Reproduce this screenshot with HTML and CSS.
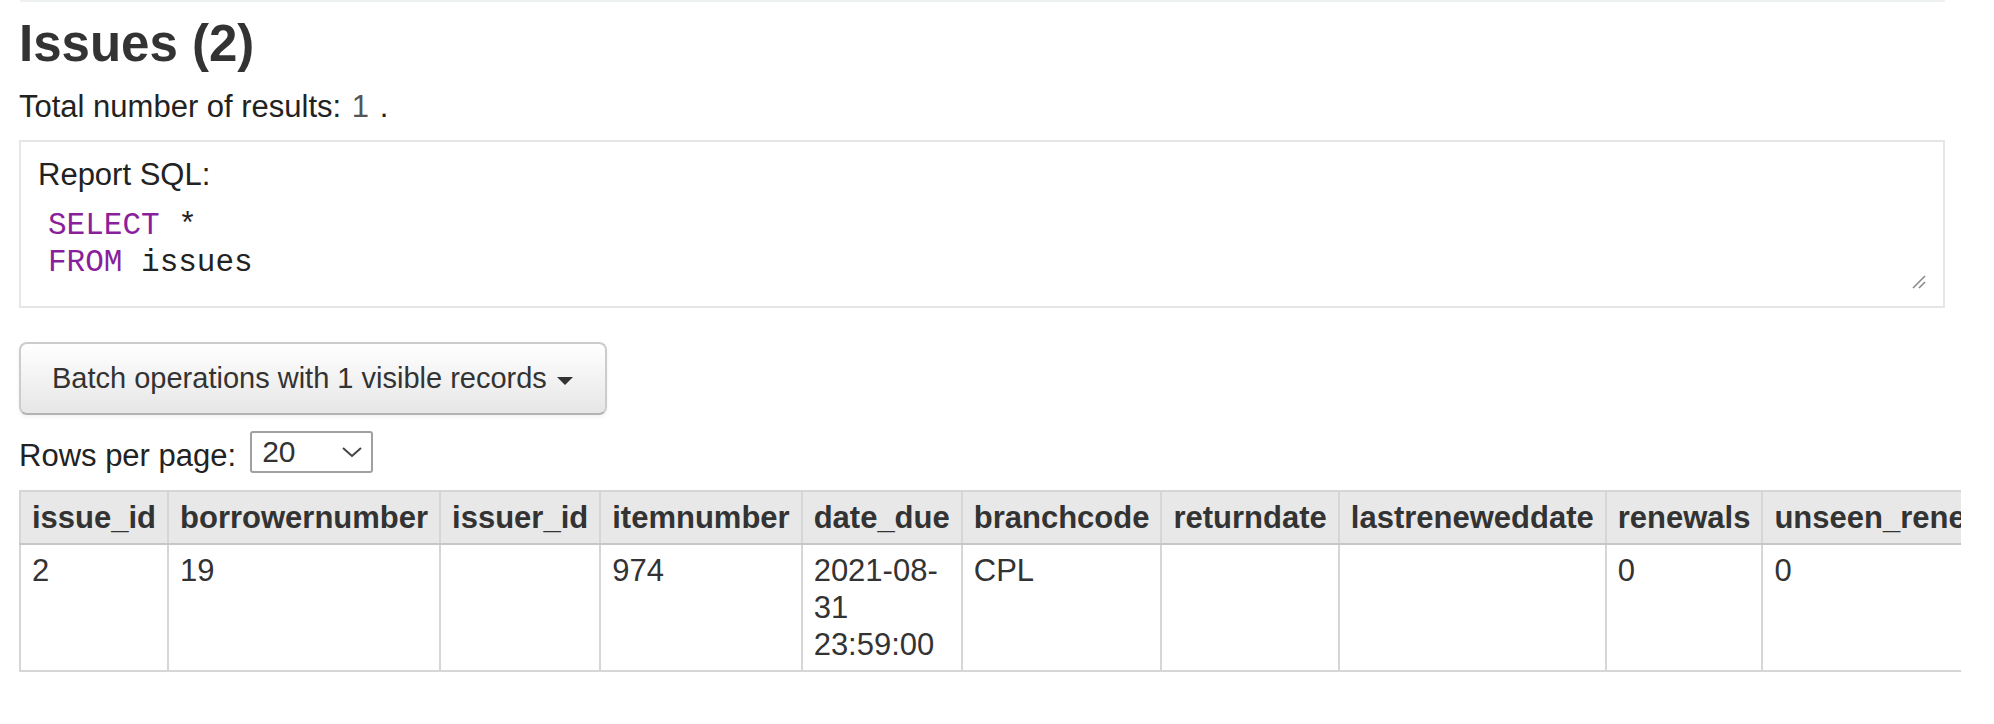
FILE: index.html
```html
<!DOCTYPE html>
<html lang="en">
<head>
<meta charset="utf-8">
<title>Issues (2)</title>
<link rel="stylesheet" href="styles.css">
</head>
<body>
<div class="page">
  <div class="topline"></div>
  <h1 class="title">Issues (2)</h1>
  <p class="total">Total number of results: <span class="num">1</span> .</p>

  <div class="sqlbox">
    <div class="sql-label">Report SQL:</div>
    <pre class="sql"><span class="kw">SELECT</span> *
<span class="kw">FROM</span> issues</pre>
    <svg class="grip" width="16" height="16" viewBox="0 0 16 16" aria-hidden="true">
      <line x1="2" y1="14" x2="14" y2="2" stroke="#8a8a8a" stroke-width="1.6"/>
      <line x1="8" y1="14" x2="14" y2="8" stroke="#8a8a8a" stroke-width="1.6"/>
    </svg>
  </div>

  <button class="batch" type="button">Batch operations with 1 visible records <span class="caret"></span></button>

  <div class="rpp">
    <span class="rpp-label">Rows per page:</span>
    <span class="select">
      <span class="select-val">20</span>
      <svg class="chev" width="22" height="12" viewBox="0 0 22 12" aria-hidden="true">
        <polyline points="2,2 11,10 20,2" fill="none" stroke="#444" stroke-width="2"/>
      </svg>
    </span>
  </div>

  <div class="tablewrap">
    <table class="results">
      <thead>
        <tr>
          <th>issue_id</th>
          <th>borrowernumber</th>
          <th>issuer_id</th>
          <th>itemnumber</th>
          <th>date_due</th>
          <th>branchcode</th>
          <th>returndate</th>
          <th>lastreneweddate</th>
          <th>renewals</th>
          <th>unseen_renewals</th>
          <th>auto_renew</th>
          <th>auto_renew_error</th>
          <th>timestamp</th>
        </tr>
      </thead>
      <tbody>
        <tr>
          <td>2</td>
          <td>19</td>
          <td></td>
          <td>974</td>
          <td>2021-08-<wbr>31 23:59:00</td>
          <td>CPL</td>
          <td></td>
          <td></td>
          <td>0</td>
          <td>0</td>
          <td>0</td>
          <td></td>
          <td>2021-08-<wbr>31 10:12:05</td>
        </tr>
      </tbody>
    </table>
  </div>
</div>
</body>
</html>
```
FILE: styles.css
```css
html, body {
  margin: 0;
  padding: 0;
  background: #ffffff;
}

body {
  font-family: "Liberation Sans", Arial, Helvetica, sans-serif;
  color: #222;
}

.page {
  margin-left: 19px;
  width: 1942px;
}

.topline {
  height: 2px;
  margin: 0 16px 0 1px;
  background: #edf1f1;
}

.title {
  margin: 14px 0 0 0;
  font-size: 51px;
  line-height: 56px;
  font-weight: bold;
  color: #333;
}

.total {
  margin: 16px 0 0 0;
  font-size: 31px;
  line-height: 37px;
  color: #222;
}

.total .num {
  color: #555;
  margin: 0 2px;
}

.sqlbox {
  position: relative;
  margin: 15px 16px 0 0;
  height: 168px;
  box-sizing: border-box;
  border: 2px solid #e6e6e6;
  padding: 14px 15px 0 17px;
}

.sql-label {
  font-size: 31px;
  line-height: 37px;
  color: #222;
}

.sql {
  margin: 14px 0 0 10px;
  font-family: "Liberation Mono", "Courier New", monospace;
  font-size: 31px;
  line-height: 37px;
  color: #222;
}

.sql .kw {
  color: #8a1f9c;
}

.grip {
  position: absolute;
  right: 16px;
  bottom: 16px;
}

.batch {
  display: flex;
  align-items: center;
  gap: 10px;
  margin-top: 34px;
  width: 588px;
  height: 73px;
  box-sizing: border-box;
  padding: 0 31px;
  font-family: "Liberation Sans", Arial, Helvetica, sans-serif;
  font-size: 29px;
  color: #333;
  background: linear-gradient(to bottom, #ffffff, #e6e6e6);
  border: 2px solid #cccccc;
  border-bottom-color: #b3b3b3;
  border-radius: 8px;
  box-shadow: inset 0 2px 0 rgba(255,255,255,0.2), 0 2px 4px rgba(0,0,0,0.06);
}

.caret {
  display: inline-block;
  width: 0;
  height: 0;
  margin-top: 4px;
  border-top: 8px solid #333;
  border-left: 8px solid transparent;
  border-right: 8px solid transparent;
}

.rpp {
  display: flex;
  align-items: flex-start;
  margin-top: 16px;
  height: 42px;
}

.rpp-label {
  margin-top: 6px;
  margin-right: 14px;
  font-size: 31px;
  line-height: 37px;
  color: #222;
}

.select {
  display: flex;
  align-items: center;
  justify-content: space-between;
  width: 123px;
  height: 42px;
  box-sizing: border-box;
  padding: 0 8px 0 10px;
  border: 2px solid #a0a0a0;
  border-radius: 3px;
  background: #fff;
}

.select-val {
  font-size: 30px;
  line-height: 36px;
  color: #333;
}

.tablewrap {
  margin-top: 17px;
  overflow: hidden;
}

.results {
  border-collapse: collapse;
  font-size: 31px;
  line-height: 37px;
  color: #333;
}

.results th,
.results td {
  padding: 7px 11px;
  text-align: left;
  vertical-align: top;
  border: 2px solid #d6d6d6;
}

.results th {
  background: #e8e8e8;
  font-weight: bold;
  white-space: nowrap;
  border-bottom-color: #c6c6c6;
}

.results td {
  background: #fff;
}
```
